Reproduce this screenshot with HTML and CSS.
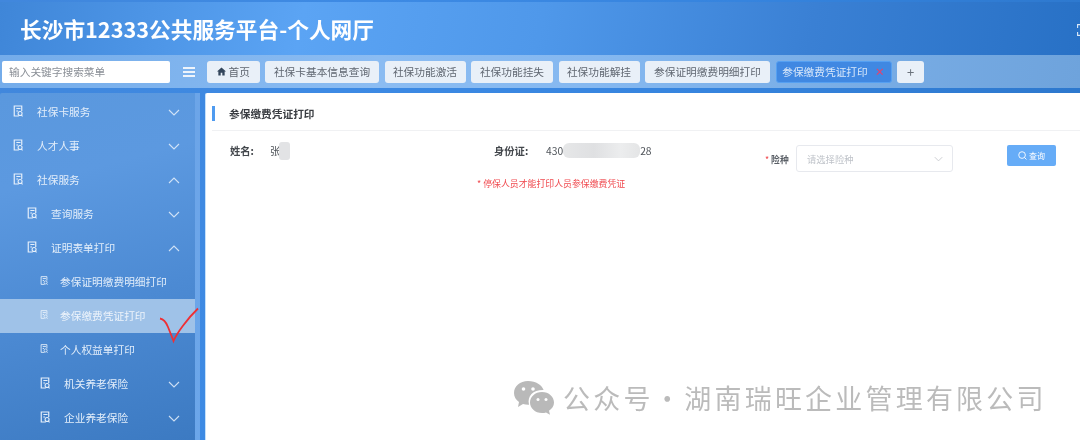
FILE: index.html
```html
<!DOCTYPE html>
<html lang="zh-CN">
<head>
<meta charset="utf-8">
<title>长沙市12333公共服务平台-个人网厅</title>
<link rel="stylesheet" href="styles.css">
</head>
<body>
<svg class="defs" width="0" height="0">
  <symbol id="doc" viewBox="0 0 12 14">
    <path d="M7 13H1.500V1h9v6M4 4h5M4 7h2" fill="none" stroke="currentColor" stroke-width="1.400"/>
    <circle cx="8.500" cy="10" r="2.400" fill="none" stroke="currentColor" stroke-width="1.300"/>
    <path d="M10 12l1.500 1.500" stroke="currentColor" stroke-width="1.300"/>
  </symbol>
  <symbol id="chev" viewBox="0 0 12 7">
    <path d="M1 1l5 5 5-5" fill="none" stroke="currentColor" stroke-width="1.100"/>
  </symbol>
</svg>
<div class="app">
  <header class="header">
    <h1 class="title">长沙市12333公共服务平台-个人网厅</h1>
    <svg class="fullscreen" width="3" height="12" viewBox="0 0 3 12"><path d="M3 .6H.6v3.400M3 11.400H.6V8" fill="none" stroke="#dfeaf7" stroke-width="1.100"/></svg>
  </header>
  <div class="toolbar">
    <div class="search">输入关键字搜索菜单</div>
    <svg class="burger" width="12" height="10" viewBox="0 0 12 10"><path d="M0 0h12v2H0zM0 4h12v2H0zM0 8h12v2H0z" fill="#eef4fb"/></svg>
    <nav class="tabs">
      <span class="tab tab-home"><svg width="9" height="9" viewBox="0 0 10 10"><path d="M5 .5L0 5h1.500v4.500h2.600V6.500h1.800v3h2.600V5H10z" fill="#33465c"/></svg>首页</span>
      <span class="tab w114">社保卡基本信息查询</span>
      <span class="tab w81">社保功能激活</span>
      <span class="tab w82">社保功能挂失</span>
      <span class="tab w81">社保功能解挂</span>
      <span class="tab w125">参保证明缴费明细打印</span>
      <span class="tab tab-active">参保缴费凭证打印<i class="close">×</i></span>
      <span class="tab tab-plus">+</span>
    </nav>
  </div>
  <div class="main">
    <aside class="sidebar">
      <ul class="menu">
        <li class="item l1"><svg class="ico"><use href="#doc"/></svg><span class="label">社保卡服务</span><svg class="chev"><use href="#chev"/></svg></li>
        <li class="item l1"><svg class="ico"><use href="#doc"/></svg><span class="label">人才人事</span><svg class="chev"><use href="#chev"/></svg></li>
        <li class="item l1"><svg class="ico"><use href="#doc"/></svg><span class="label">社保服务</span><svg class="chev up"><use href="#chev"/></svg></li>
        <li class="item l2"><svg class="ico"><use href="#doc"/></svg><span class="label">查询服务</span><svg class="chev"><use href="#chev"/></svg></li>
        <li class="item l2"><svg class="ico"><use href="#doc"/></svg><span class="label">证明表单打印</span><svg class="chev up"><use href="#chev"/></svg></li>
        <li class="item l3"><svg class="ico"><use href="#doc"/></svg><span class="label">参保证明缴费明细打印</span></li>
        <li class="item l3 active"><svg class="ico"><use href="#doc"/></svg><span class="label">参保缴费凭证打印</span></li>
        <li class="item l3"><svg class="ico"><use href="#doc"/></svg><span class="label">个人权益单打印</span></li>
        <li class="item l4"><svg class="ico"><use href="#doc"/></svg><span class="label">机关养老保险</span><svg class="chev"><use href="#chev"/></svg></li>
        <li class="item l4"><svg class="ico"><use href="#doc"/></svg><span class="label">企业养老保险</span><svg class="chev"><use href="#chev"/></svg></li>
      </ul>
    </aside>
    <div class="scroll"></div>
    <section class="content">
      <div class="card-head"><span class="card-title">参保缴费凭证打印</span></div>
      <div class="form">
        <div class="info">
          <div class="info-row">
            <div class="field name-field"><b class="key">姓名:</b><span class="val">张<i class="mask mask-name"></i></span></div>
            <div class="field"><b class="key id-key">身份证:</b><span class="val">430<i class="mask mask-id"></i>28</span></div>
          </div>
          <p class="note">* 停保人员才能打印人员参保缴费凭证</p>
        </div>
        <div class="query">
          <label class="q-label"><i class="star">*</i> 险种</label>
          <div class="select"><span>请选择险种</span><svg class="select-chev"><use href="#chev"/></svg></div>
          <button class="btn" type="button"><svg width="9" height="9" viewBox="0 0 10 10"><circle cx="4.500" cy="4.500" r="3.700" fill="none" stroke="#fff" stroke-width="1"/><path d="M7.200 7.200L9.400 9.400" stroke="#fff"/></svg>查询</button>
        </div>
      </div>
    </section>
  </div>
  <svg class="tick" width="44" height="40" viewBox="0 0 44 40"><path d="M3 11.500C6 12 9 15 11 20c2 5 4 10 5.500 14C20 26 30 12 41 1.500" fill="none" stroke="#ee2f35" stroke-width="1.800"/></svg>
  <div class="watermark">
    <svg width="40" height="34" viewBox="0 0 40 34">
      <path d="M14 0C6 0 0 5 0 12c0 4 2 7 5 9l-1 5 5-3c2 .6 4 .8 6 .7C13 15 19 9 29 9h.6C28 4 22 0 14 0z" fill="#b9b9b9"/>
      <path d="M28 11c-7 0-12 5-12 10.500S21 32 28 32c1.500 0 3-.2 4-.6l4 2.400-1-4c3-2 5-5 5-8.300C40 16 35 11 28 11z" fill="#b9b9b9"/>
      <circle cx="9.500" cy="8" r="1.800" fill="#fff"/><circle cx="19" cy="8" r="1.800" fill="#fff"/>
      <circle cx="24" cy="18.500" r="1.500" fill="#fff"/><circle cx="32" cy="18.500" r="1.500" fill="#fff"/>
    </svg>
    <span class="wm-text">公众号 · 湖南瑞旺企业管理有限公司</span>
  </div>
</div>
</body>
</html>
```
FILE: styles.css
```css
* { box-sizing: border-box; }
html, body { margin: 0; padding: 0; height: 100%; overflow: hidden; background: #fff; }
body { font-family: "Noto Sans CJK SC", "Liberation Sans", sans-serif; }
.defs { position: absolute; }
.app {
  position: relative;
  width: 1080px;
  height: 440px;
  padding-top: 2px;
  background: linear-gradient(110deg, #4187dc 0%, #3d8ae4 30%, #3684de 60%, #2a74c8 100%);
  display: flex;
  flex-direction: column;
  overflow: hidden;
  filter: blur(0.4px);
}
.header {
  height: 53px;
  display: flex;
  align-items: center;
  justify-content: space-between;
  padding-left: 20px;
  background: linear-gradient(100deg, #3f86d8 0%, #5ba4f4 28%, #4f98ea 50%, #3a80d4 75%, #2871c6 100%);
}
.title { margin: 0; font-size: 21.700px; font-weight: 700; line-height: 1; color: #fff; padding-top: 1px; }
.fullscreen { margin-top: 2px; flex: none; }
.toolbar {
  height: 33px;
  display: flex;
  align-items: center;
  padding-left: 2px;
  background: linear-gradient(100deg, #74acea 0%, #8bbcf2 35%, #85b8f0 55%, #6ea3dc 100%);
}
.search {
  width: 168px;
  height: 22px;
  padding-left: 7px;
  border-radius: 2px;
  background: #fff;
  color: #8a8f96;
  font-size: 10.700px;
  line-height: 21px;
}
.burger { margin-left: 13px; flex: none; }
.tabs { display: flex; gap: 5.500px; margin-left: 12px; }
.tab {
  height: 22px;
  display: flex;
  align-items: center;
  justify-content: center;
  border-radius: 3px;
  background: #e9f0f8;
  color: #5f6670;
  font-size: 10.700px;
}
.tab-home { width: 52.500px; gap: 3px; }
.w114 { width: 114px; }
.w81 { width: 81px; }
.w82 { width: 82px; }
.w125 { width: 125px; }
.tab-active { width: 116px; background: #4088e2; border: 1px solid #55a0f2; color: #dbe9fa; gap: 7px; }
.close { font-style: normal; color: #e8406a; font-size: 10px; font-weight: 700; }
.tab-plus { width: 27px; font-size: 13px; color: #6b727b; }
.main { flex: 1; display: flex; min-height: 0; margin-top: 5px; }
.sidebar {
  width: 195px;
  flex: none;
  padding-top: 2px;
  background: linear-gradient(165deg, #5a98de 0%, #5c99e0 25%, #4c8ad3 60%, #3c7ac2 100%);
  border-top-left-radius: 2px;
}
.menu { list-style: none; margin: 0; padding: 0; }
.item { height: 34px; display: flex; align-items: center; position: relative; color: #e3eefa; font-size: 10.700px; }
.ico { width: 10px; height: 12px; flex: none; color: #e6f0fb; margin-top: -2px; }
.label { line-height: 1; }
.l1 { padding-left: 13px; }
.l1 .label { margin-left: 14px; }
.l2 { padding-left: 27px; }
.l2 .label { margin-left: 14px; }
.l3 { padding-left: 40px; }
.l3 .ico { width: 8px; height: 9px; margin-top: -3px; }
.l3 .label { margin-left: 12px; }
.l4 { padding-left: 40px; }
.l4 .label { margin-left: 14px; }
.active { background: #9fc2e8; color: #eef4fb; }
.chev { position: absolute; right: 15px; top: 14px; width: 12px; height: 7px; color: #e6f0fb; opacity: 0.85; }
.up { transform: rotate(180deg); }
.scroll { width: 5px; flex: none; background: rgba(255, 255, 255, 0.24); }
.content {
  flex: 1;
  margin-left: 5px;
  background: #fff;
  border-left: 1px solid #c4e0fa;
  border-top-left-radius: 2px;
  display: flex;
  flex-direction: column;
}
.card-head {
  height: 38px;
  margin-left: 6px;
  padding-top: 13px;
  border-bottom: 1px solid #f0f1f3;
}
.card-title {
  display: block;
  height: 15px;
  padding-left: 14px;
  border-left: 3px solid #4f9bf0;
  color: #3a3d42;
  font-size: 10.700px;
  font-weight: 700;
  line-height: 15px;
}
.form { display: flex; }
.info { width: 559px; padding: 12px 0 0 24px; flex: none; }
.info-row { display: flex; align-items: center; height: 15px; }
.field { display: flex; align-items: center; font-size: 10.300px; color: #4e5359; }
.name-field { width: 264px; }
.key { font-weight: 700; color: #44484d; width: 40px; }
.id-key { width: 52px; }
.val { display: flex; align-items: center; }
.mask { display: block; background: #e2e3e5; border-radius: 3px; }
.mask-name { width: 11px; height: 18px; margin-left: -1px; }
.mask-id { width: 77px; height: 15px; background: linear-gradient(90deg, #e6e7e8, #dfe0e2 40%, #ecedee 75%, #e4e5e6); border-radius: 6px; }
.note { margin: 19px 0 0 247px; white-space: nowrap; color: #f04a4f; font-size: 8.900px; line-height: 14px; }
.query { display: flex; align-items: flex-start; padding-top: 14px; }
.q-label { margin: 8px 0 0 0; width: 31px; font-size: 8.800px; line-height: 13px; color: #5a5f66; font-weight: 700; white-space: nowrap; }
.star { font-style: normal; font-weight: 400; color: #f04a4f; }
.select {
  width: 157px;
  height: 27px;
  padding: 0 9px 0 10px;
  display: flex;
  align-items: center;
  justify-content: space-between;
  border: 1px solid #e7e9ee;
  border-radius: 3px;
  color: #bfc3c9;
  font-size: 9.300px;
}
.select-chev { width: 9px; height: 6px; color: #c2c5ca; }
.btn {
  width: 49px;
  height: 21px;
  margin-left: 54px;
  padding: 0;
  display: flex;
  align-items: center;
  justify-content: center;
  gap: 2px;
  border: 0;
  border-radius: 2px;
  background: #66acf7;
  color: #fff;
  font-family: inherit;
  font-size: 8px;
}
.tick { position: absolute; left: 157px; top: 307px; }
.watermark { position: absolute; left: 514px; top: 381px; display: flex; align-items: center; gap: 9px; }
.wm-text { color: #bbbbbb; font-size: 27px; line-height: 34px; letter-spacing: 3.200px; word-spacing: -9px; font-weight: 400; white-space: nowrap; }
```
